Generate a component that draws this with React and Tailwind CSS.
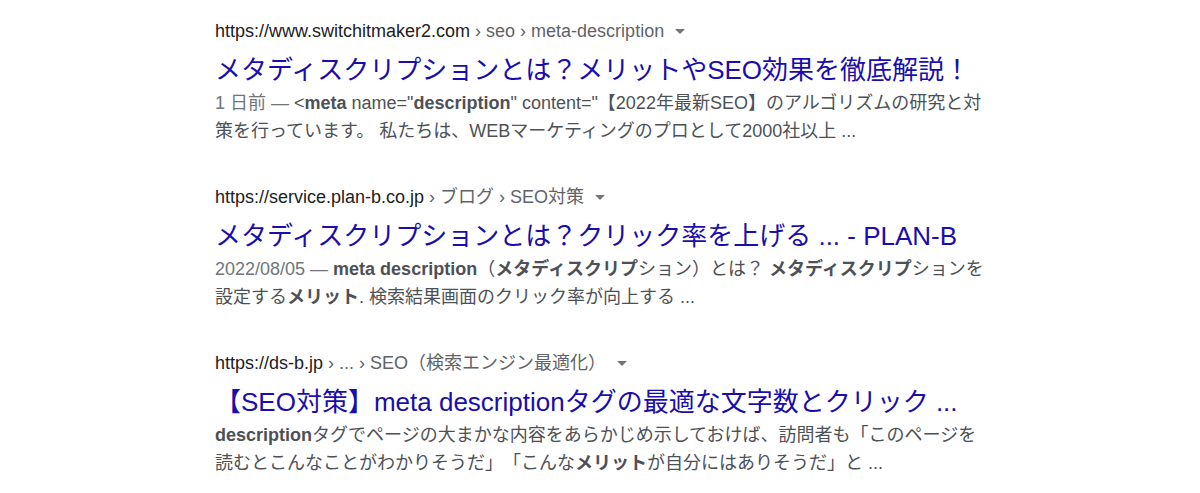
import React from "react";

const FONT = { fontFamily: '"Liberation Sans", Arial, "Noto Sans CJK JP", sans-serif' };

function Caret() {
  return (
    <span className="ml-[11px] inline-block h-0 w-0 border-l-[5px] border-r-[5px] border-t-[5px] border-l-transparent border-r-transparent border-t-[#70757a] align-middle relative top-[-1px]" />
  );
}

function Result({ domain, path, title, lines, last }) {
  return (
    <div className={last ? "" : "mb-[40px]"}>
      <div className="h-[24px] whitespace-nowrap text-[18px] leading-[24px]">
        <span className="text-[#202124]">{domain}</span>
        <span className="text-[#5f6368]">{path}</span>
        <Caret />
      </div>
      <div className="mt-[10px] h-[34px] whitespace-nowrap text-[26px] leading-[34px] text-[#1a0dab]">
        {title}
      </div>
      <div className="mt-[2px] text-[18px] leading-[28px] text-[#4d5156]">
        {lines.map((l, i) => (
          <div key={i} className="whitespace-nowrap">
            {l}
          </div>
        ))}
      </div>
    </div>
  );
}

const B = ({ children }) => <b className="font-bold text-[#4d5156]">{children}</b>;
const D = ({ children }) => <span className="text-[#70757a]">{children}</span>;

export default function App() {
  return (
    <div className="h-[493px] w-[1200px] overflow-hidden bg-white [text-spacing-trim:space-all]" style={FONT}>
      <div className="pl-[215px] pt-[19px]">
        <Result
          domain="https://www.switchitmaker2.com"
          path={"\u00a0› seo › meta-description"}
          title="メタディスクリプションとは？メリットやSEO効果を徹底解説！"
          lines={[
            <>
              <D>1 日前 — </D>&lt;<B>meta</B> name="<B>description</B>" content="【2022年最新SEO】のアルゴリズムの研究と対
            </>,
            <>策を行っています。 私たちは、WEBマーケティングのプロとして2000社以上 ...</>,
          ]}
        />
        <Result
          domain="https://service.plan-b.co.jp"
          path={"\u00a0› ブログ › SEO対策"}
          title="メタディスクリプションとは？クリック率を上げる ... - PLAN-B"
          lines={[
            <>
              <D>2022/08/05 — </D>
              <B>meta description</B>（<B>メタディスクリプ</B>ション）とは？ <B>メタディスクリプ</B>ションを
            </>,
            <>
              設定する<B>メリット</B>. 検索結果画面のクリック率が向上する ...
            </>,
          ]}
        />
        <Result
          last
          domain="https://ds-b.jp"
          path={"\u00a0› ... › SEO（検索エンジン最適化）"}
          title="【SEO対策】meta descriptionタグの最適な文字数とクリック ..."
          lines={[
            <>
              <B>description</B>タグでページの大まかな内容をあらかじめ示しておけば、訪問者も「このページを
            </>,
            <>
              読むとこんなことがわかりそうだ」「こんな<B>メリット</B>が自分にはありそうだ」と ...
            </>,
          ]}
        />
      </div>
    </div>
  );
}
